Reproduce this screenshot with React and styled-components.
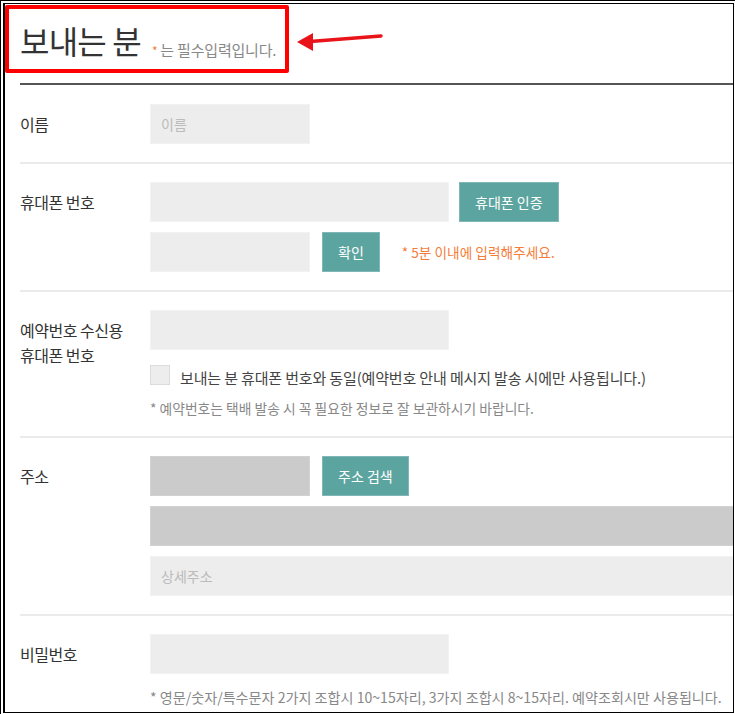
import React from "react";
import styled, { createGlobalStyle } from "styled-components";

const GlobalStyle = createGlobalStyle`
  body {
    margin: 0;
    background: #fff;
    font-family: "Noto Sans CJK KR", "Noto Sans", sans-serif;
  }
`;

const TEAL = "#5ca49f";
const ORANGE = "#f47d3a";

const Outer = styled.div`
  width: 735px;
  height: 714px;
  box-sizing: border-box;
  border-left: 1px solid #000;
  border-top: 1px solid #000;
  padding: 2px 0 0 2px;
`;

const Frame = styled.div`
  position: relative;
  width: 731px;
  height: 710px;
  box-sizing: border-box;
  border-left: 2px solid #000;
  border-top: 1px solid #000;
  border-right: 1px solid #000;
  border-bottom: 1px solid #000;
  overflow: hidden;
`;

const Content = styled.div`
  padding-left: 15px;
`;

const Header = styled.div`
  display: flex;
  align-items: flex-start;
  height: 81px;
  box-sizing: border-box;
  padding-top: 20px;
  border-bottom: 2px solid #555;
`;

const Title = styled.h2`
  margin: 0;
  font-size: 32px;
  line-height: 32px;
  font-weight: 400;
  letter-spacing: -0.8px;
  color: #333;
`;

const Required = styled.span`
  margin: 18px 0 0 11px;
  font-size: 15px;
  line-height: 15px;
  color: #888;
  letter-spacing: -0.2px;
`;

const Star = styled.span`
  color: ${ORANGE};
  font-size: 12px;
  margin-right: 3px;
`;

const Highlight = styled.div`
  position: absolute;
  left: 0;
  top: 1px;
  width: 284px;
  height: 68px;
  box-sizing: border-box;
  border: 4px solid #f00;
  border-radius: 2px;
  pointer-events: none;
`;

const Arrow = styled.svg`
  position: absolute;
  left: 290px;
  top: 22px;
`;

const Row = styled.div`
  display: flex;
  padding: ${(p) => (p.$first ? "19px" : "18px")} 0 18px;
  border-top: ${(p) => (p.$first ? "none" : "2px solid #ebebeb")};
`;

const Label = styled.div`
  width: 130px;
  flex-shrink: 0;
  font-size: 16px;
  letter-spacing: -0.5px;
  color: #333;
  line-height: ${(p) => (p.$multi ? "25px" : "40px")};
  padding-top: ${(p) => (p.$multi ? "8px" : "0")};
`;

const Fields = styled.div`
  flex: 1;
  display: flex;
  flex-direction: column;
  gap: 10px;
  min-width: 0;
`;

const Line = styled.div`
  display: flex;
  align-items: center;
  gap: ${(p) => p.$gap || 12}px;
  margin-top: ${(p) => p.$mt || 0}px;
`;

const Input = styled.input`
  width: ${(p) => (p.$w ? `${p.$w}px` : "700px")};
  height: 40px;
  box-sizing: border-box;
  flex-shrink: 0;
  border: 1px solid ${(p) => (p.$dark ? "#d2d2d2" : "#f2f2f2")};
  background: ${(p) => (p.$dark ? "#cbcbcb" : "#ededed")};
  padding: 0 10px;
  font-family: inherit;
  font-size: 14px;
  color: #333;
  outline: none;
  &::placeholder {
    color: #bbb;
  }
`;

const Button = styled.button`
  height: 40px;
  padding: 0 15px;
  border: 1px solid #7fb8b4;
  background: ${TEAL};
  color: #fff;
  font-family: inherit;
  font-size: 14px;
  cursor: pointer;
`;

const Hint = styled.span`
  margin-left: 10px;
  font-size: 13.7px;
  color: ${ORANGE};
`;

const Check = styled.input`
  appearance: none;
  margin: 0;
  width: 20px;
  height: 20px;
  box-sizing: border-box;
  background: #ededed;
  border: 1px solid #dcdcdc;
`;

const CheckText = styled.span`
  margin-top: 5px;
  font-size: 15px;
  line-height: 15px;
  letter-spacing: -0.15px;
  color: #444;
`;

const Note = styled.p`
  margin: 3px 0 0;
  font-size: ${(p) => p.$size || 13.8}px;
  line-height: 20px;
  color: #888;
`;

const App = () => {
  return (
    <Outer>
      <GlobalStyle />
      <Frame>
        <Content>
          <Header>
            <Title>보내는 분</Title>
            <Required>
              <Star>*</Star>는 필수입력입니다.
            </Required>
          </Header>

          <Row $first>
            <Label>이름</Label>
            <Fields>
              <Input $w={160} placeholder="이름" />
            </Fields>
          </Row>

          <Row>
            <Label>휴대폰 번호</Label>
            <Fields>
              <Line $gap={10}>
                <Input $w={299} />
                <Button>휴대폰 인증</Button>
              </Line>
              <Line>
                <Input $w={160} />
                <Button>확인</Button>
                <Hint>* 5분 이내에 입력해주세요.</Hint>
              </Line>
            </Fields>
          </Row>

          <Row>
            <Label $multi>
              예약번호 수신용
              <br />
              휴대폰 번호
            </Label>
            <Fields>
              <Input $w={299} />
              <Line $gap={10} $mt={5}>
                <Check type="checkbox" />
                <CheckText>
                  보내는 분 휴대폰 번호와 동일(예약번호 안내 메시지 발송 시에만 사용됩니다.)
                </CheckText>
              </Line>
              <Note>* 예약번호는 택배 발송 시 꼭 필요한 정보로 잘 보관하시기 바랍니다.</Note>
            </Fields>
          </Row>

          <Row>
            <Label>주소</Label>
            <Fields>
              <Line>
                <Input $w={160} $dark />
                <Button>주소 검색</Button>
              </Line>
              <Input $dark />
              <Input placeholder="상세주소" />
            </Fields>
          </Row>

          <Row>
            <Label>비밀번호</Label>
            <Fields>
              <Input $w={299} type="password" />
              <Note $size={14.1}>
                * 영문/숫자/특수문자 2가지 조합시 10~15자리, 3가지 조합시 8~15자리. 예약조회시만 사용됩니다.
              </Note>
            </Fields>
          </Row>
        </Content>

        <Highlight />
        <Arrow width="92" height="28" viewBox="0 0 92 28">
          <line x1="15" y1="15.5" x2="86" y2="10" stroke="#e8141a" strokeWidth="3.5" strokeLinecap="round" />
          <polygon points="2,16 18,7 18,25" fill="#e8141a" />
        </Arrow>
      </Frame>
    </Outer>
  );
};

export default App;
